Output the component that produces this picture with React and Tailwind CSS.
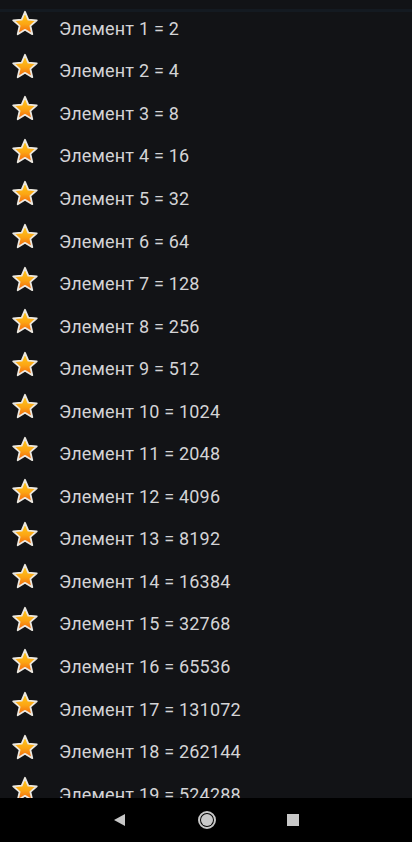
import React from 'react'

const items = Array.from({ length: 19 }, (_, i) => ({ n: i + 1, v: Math.pow(2, i + 1) }))

const Star = () => (
  <svg width="28" height="28" viewBox="0 0 28 28">
    <defs>
      <linearGradient id="sg" x1="0" y1="0" x2="0" y2="1">
        <stop offset="0%" stopColor="#ffcc1a" />
        <stop offset="55%" stopColor="#fca614" />
        <stop offset="100%" stopColor="#f0600e" />
      </linearGradient>
    </defs>
    <path
      d="M14 1.8 L17.3 9.6 L25.8 10.3 L19.4 15.9 L21.3 24.2 L14 19.8 L6.7 24.2 L8.6 15.9 L2.2 10.3 L10.7 9.6 Z"
      fill="url(#sg)"
      stroke="#ece8e0"
      strokeWidth="1.8"
      strokeLinejoin="round"
    />
  </svg>
)

export default function App() {
  return (
    <div className="w-[412px] h-[842px] bg-[#121316] flex flex-col overflow-hidden" style={{ fontFamily: 'Roboto, "Noto Sans", sans-serif' }}>
      <div className="flex-1 overflow-hidden relative">
        <div className="h-[3px] mt-[9px] bg-[#141a21]" />
        <div className="-mt-[5px]">
          {items.map((it) => (
            <div key={it.n} className="h-[42.55px] flex items-center">
              <div className="w-[48px] flex justify-center -mt-[8px] pl-[1px]">
                <Star />
              </div>
              <span className="ml-[11px] text-[18px] text-[#d4d4d6] tracking-[0.2px]">
                Элемент {it.n} = {it.v}
              </span>
            </div>
          ))}
        </div>
      </div>
      <div className="h-[44px] bg-black flex items-center shrink-0 pl-[113px]">
        <svg width="13" height="14" viewBox="0 0 13 14">
          <path d="M12 1 L12 13 L1 7 Z" fill="#c8c8c8" />
        </svg>
        <div className="ml-[72px] w-[18px] h-[18px] rounded-full border-2 border-[#c8c8c8] flex items-center justify-center">
          <div className="w-[12px] h-[12px] rounded-full bg-[#c8c8c8]" />
        </div>
        <div className="ml-[71px] w-[12px] h-[12px] bg-[#c8c8c8]" />
      </div>
    </div>
  )
}
